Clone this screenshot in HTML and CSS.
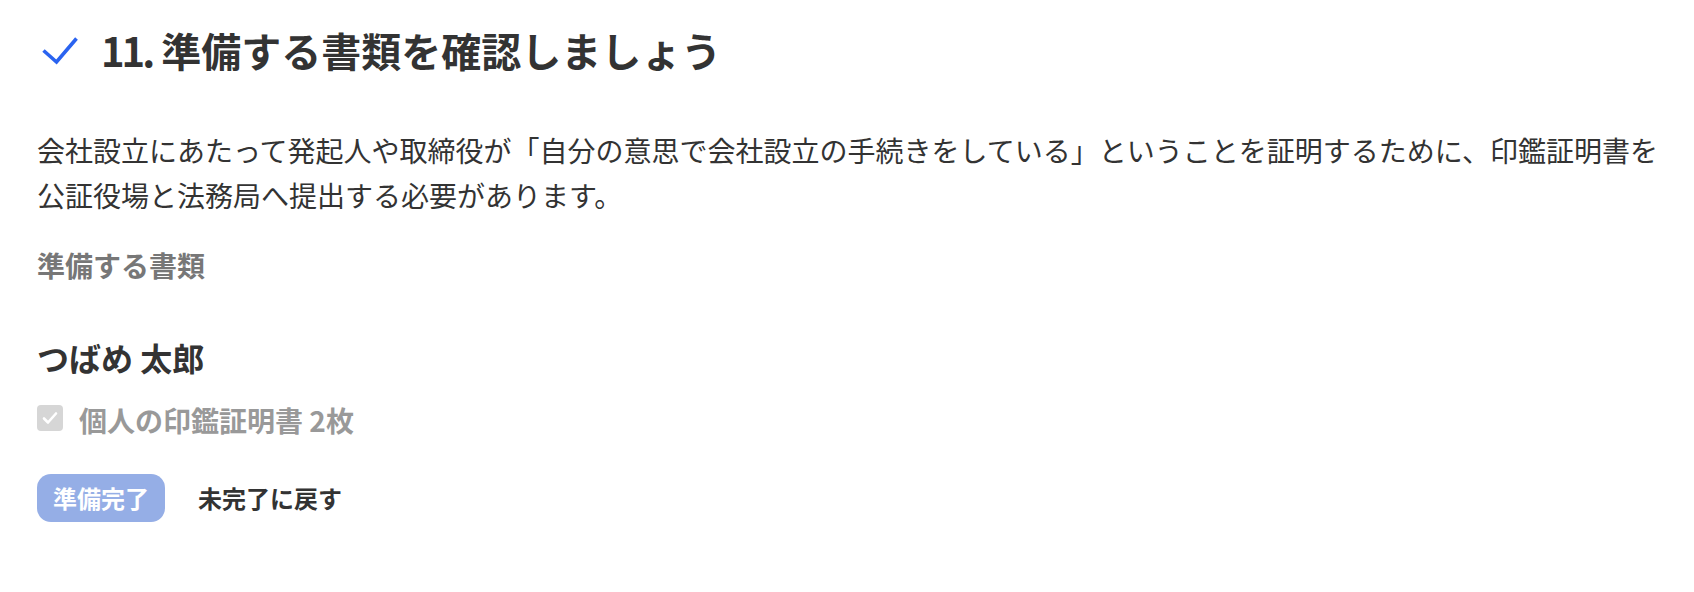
FILE: index.html
```html
<!DOCTYPE html>
<html lang="ja">
<head>
<meta charset="utf-8">
<title>準備する書類を確認しましょう</title>
<link rel="stylesheet" href="styles.css">
</head>
<body>
<main class="page">
  <header class="header">
    <svg class="done-icon" viewBox="0 0 36 28" width="36" height="28" aria-hidden="true">
      <path d="M1.5 13.5 L14.5 25 L34.5 1.5" fill="none" stroke="#2a63f0" stroke-width="3.6" stroke-linecap="butt" stroke-linejoin="miter"/>
    </svg>
    <h1 class="title"><span class="num">11.</span> 準備する書類を確認しましょう</h1>
  </header>
  <p class="lead">会社設立にあたって発起人や取締役が「自分の意思で会社設立の手続きをしている」ということを証明するために、印鑑証明書を公証役場と法務局へ提出する必要があります。</p>
  <h2 class="subhead">準備する書類</h2>
  <h3 class="person">つばめ 太郎</h3>
  <label class="doc">
    <span class="box">
      <svg viewBox="0 0 26 26" width="26" height="26" aria-hidden="true">
        <path d="M7 13.5 L11 17.5 L19 8.5" fill="none" stroke="#ffffff" stroke-width="2.6" stroke-linecap="round" stroke-linejoin="round"/>
      </svg>
    </span>
    <span class="doc-label">個人の印鑑証明書 2枚</span>
  </label>
  <div class="actions">
    <button class="btn-done" type="button">準備完了</button>
    <button class="btn-undo" type="button">未完了に戻す</button>
  </div>
</main>
</body>
</html>
```
FILE: styles.css
```css
html, body {
  margin: 0;
  padding: 0;
  background: #ffffff;
}
body {
  font-family: "Noto Sans CJK JP", "Noto Sans", sans-serif;
  color: #333333;
}
.page {
  padding: 24px 0 0 37px;
}
.header {
  display: flex;
  align-items: center;
  gap: 23px;
  padding-left: 5px;
  height: 52px;
}
.done-icon {
  display: block;
  flex: none;
  margin-top: 2px;
}
.title {
  margin: 0;
  font-size: 40px;
  line-height: 52px;
  font-weight: 700;
  color: #333333;
}
.num {
  letter-spacing: -3px;
}
.lead {
  margin: 51.5px 0 0 0;
  font-size: 28px;
  line-height: 45px;
  font-weight: 400;
  color: #333333;
  max-width: 58.5em;
}
.subhead {
  margin: 27px 0 0 0;
  font-size: 28px;
  line-height: 40px;
  font-weight: 700;
  color: #777777;
}
.person {
  margin: 52.5px 0 0 0;
  font-size: 32px;
  line-height: 40px;
  font-weight: 700;
  color: #333333;
}
.doc {
  margin-top: 21px;
  display: flex;
  align-items: center;
  gap: 16px;
  height: 40px;
}
.box {
  width: 26px;
  height: 26px;
  border-radius: 4px;
  background: #d6d6d6;
  display: flex;
  flex: none;
}
.doc-label {
  font-size: 28px;
  line-height: 40px;
  font-weight: 700;
  color: #999999;
  margin-top: 4px;
}
.actions {
  margin-top: 36px;
  display: flex;
  align-items: center;
  gap: 33px;
}
.btn-done {
  font-family: inherit;
  border: none;
  background: #95aee6;
  color: #ffffff;
  font-size: 24px;
  font-weight: 700;
  line-height: 48px;
  height: 48px;
  padding: 0 16px;
  border-radius: 14px;
}
.btn-undo {
  font-family: inherit;
  border: none;
  background: transparent;
  color: #333333;
  font-size: 24px;
  font-weight: 700;
  line-height: 48px;
  padding: 0;
}
```
